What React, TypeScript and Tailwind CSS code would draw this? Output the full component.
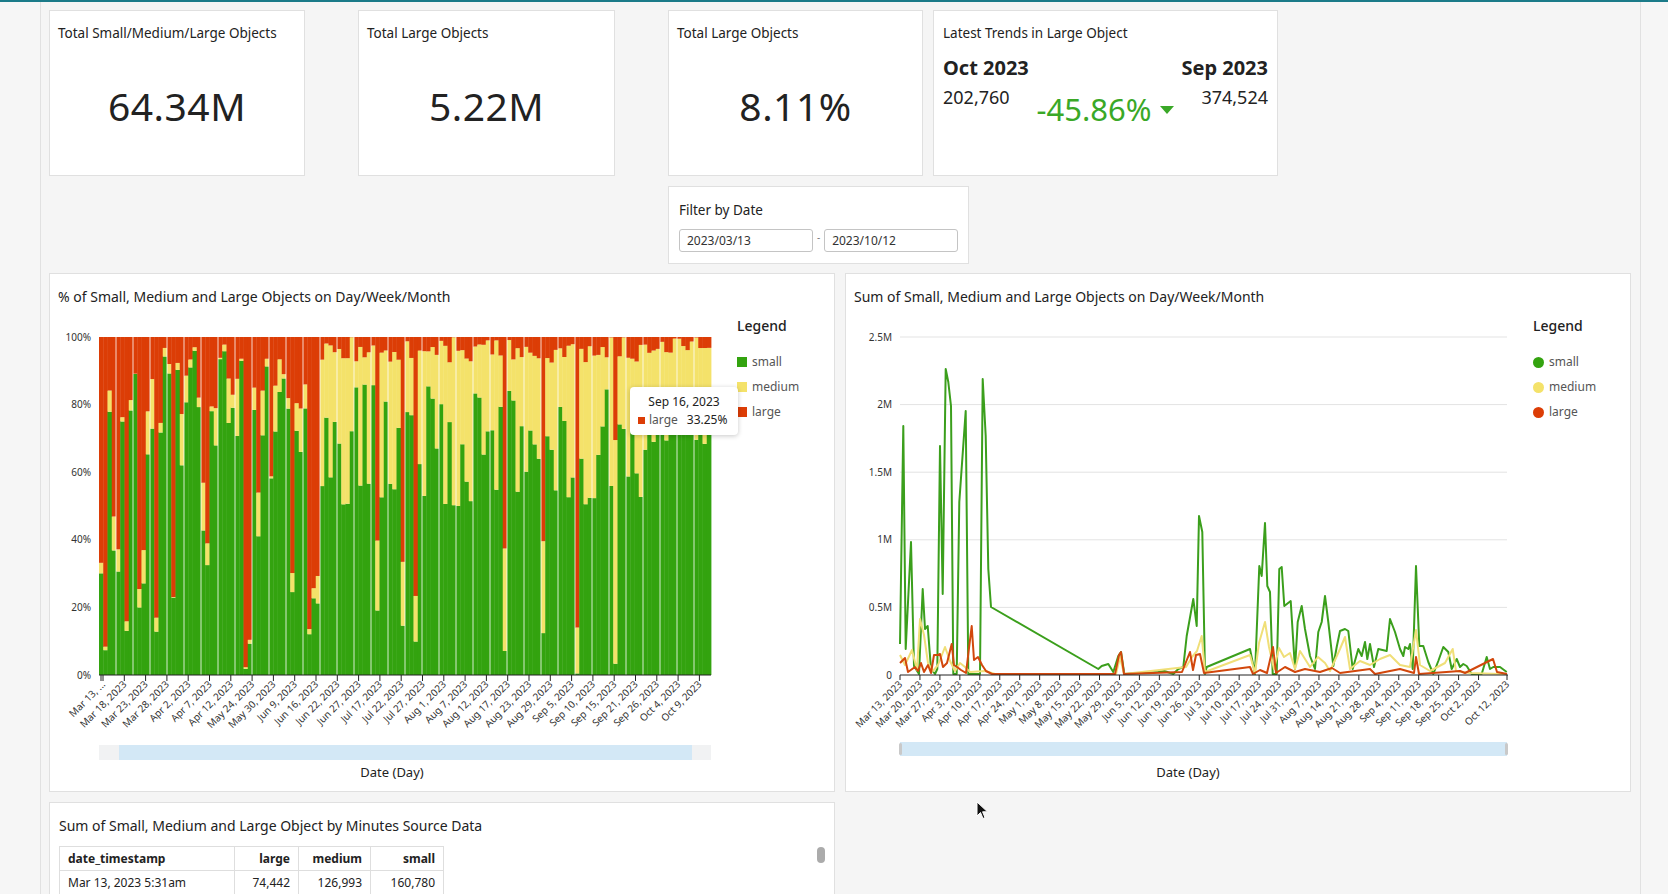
import React from 'react';

const GREEN = '#33a30f';
const YELLOW = '#f4e26a';
const RED = '#dc3d06';

type Pt = [number, number];

// simple seeded random so the bars stay put between renders
function makeRand(seed: number) {
  let s = seed;
  return () => {
    s = (s * 16807) % 2147483647;
    return (s - 1) / 2147483646;
  };
}

const bars = (() => {
  const rand = makeRand(11);
  const out: { small: number; medium: number; large: number }[] = [];
  for (let i = 0; i < 144; i++) {
    let small = 0;
    let medium = 0;
    let large = 0;
    const r = rand();
    if (i < 52) {
      if (r < 0.3) {
        large = 0.4 + rand() * 0.6;
        medium = rand() * 0.3 * (1 - large);
        small = 1 - large - medium;
      } else {
        small = 0.62 + rand() * 0.34;
        medium = rand() * (1 - small) * 0.6;
        large = 1 - small - medium;
      }
    } else if (i < 128) {
      if (r < 0.1) {
        large = 0.3 + rand() * 0.65;
        small = rand() * 0.5 * (1 - large);
        medium = 1 - large - small;
      } else {
        small = 0.5 + rand() * 0.36;
        large = rand() * 0.08;
        medium = 1 - small - large;
      }
    } else {
      small = 0.66 + rand() * 0.14;
      large = rand() * 0.05;
      medium = 1 - small - large;
    }
    out.push({ small, medium, large });
  }
  return out;
})();

const barLabels = [
  'Mar 13, ...', 'Mar 18, 2023', 'Mar 23, 2023', 'Mar 28, 2023', 'Apr 2, 2023', 'Apr 7, 2023',
  'Apr 12, 2023', 'May 24, 2023', 'May 30, 2023', 'Jun 9, 2023', 'Jun 16, 2023', 'Jun 22, 2023',
  'Jun 27, 2023', 'Jul 17, 2023', 'Jul 22, 2023', 'Jul 27, 2023', 'Aug 1, 2023', 'Aug 7, 2023',
  'Aug 12, 2023', 'Aug 17, 2023', 'Aug 23, 2023', 'Aug 29, 2023', 'Sep 5, 2023', 'Sep 10, 2023',
  'Sep 15, 2023', 'Sep 21, 2023', 'Sep 26, 2023', 'Oct 4, 2023', 'Oct 9, 2023',
];

const weekLabels = [
  'Mar 13', 'Mar 20', 'Mar 27', 'Apr 3', 'Apr 10', 'Apr 17', 'Apr 24', 'May 1', 'May 8', 'May 15',
  'May 22', 'May 29', 'Jun 5', 'Jun 12', 'Jun 19', 'Jun 26', 'Jul 3', 'Jul 10', 'Jul 17', 'Jul 24',
  'Jul 31', 'Aug 7', 'Aug 14', 'Aug 21', 'Aug 28', 'Sep 4', 'Sep 11', 'Sep 18', 'Sep 25', 'Oct 2',
];

// [x px from first day, height px above zero]
const smallLine: Pt[] = [
  [0, 31], [3.3, 249], [5.7, 26], [11, 133], [14, 9], [19, 1], [22.7, 86], [25, 46], [27.7, 49], [31, 6],
  [35, 1], [37.3, 6], [40, 229], [42.7, 81], [45.7, 306], [48.3, 293], [51, 269], [53.3, 1], [56.7, 1],
  [59.3, 173], [65.7, 264], [68.3, 1], [80, 1], [82.7, 296], [85.7, 239], [88.3, 106], [91, 68],
  [198.3, 6], [201.7, 9], [208.3, 11], [213.3, 3], [218.3, 19], [221, 23], [224.3, 1], [258.3, 3],
  [264.3, 4], [273.3, 1], [278.3, 6], [283.3, 8], [286.7, 39], [293.3, 76], [296.7, 49], [299, 159],
  [302.3, 143], [305, 1], [306.7, 8], [350, 26], [355, 1], [359.3, 109], [361.7, 99], [365, 152],
  [367.3, 89], [370, 83], [372.7, 1], [376.7, 1], [379.3, 106], [381.7, 108], [384.3, 69], [390.7, 74],
  [395, 6], [397.7, 53], [401.7, 69], [405, 46], [410, 19], [415, 6], [418.3, 43], [421.7, 53], [425, 79],
  [428.3, 53], [433.3, 9], [436.7, 28], [440, 44], [445, 46], [448.3, 44], [452.7, 6], [458.3, 26],
  [461.7, 19], [465, 33], [467.3, 16], [470, 31], [474, 8], [478.3, 26], [486.7, 24], [490, 56], [495, 43],
  [500, 26], [503.3, 19], [505, 28], [508.3, 26], [510, 31], [512.7, 6], [516, 109], [519.3, 29],
  [523.3, 29], [528.3, 13], [533.3, 1], [538.3, 14], [543.3, 28], [548.3, 23], [551.7, 6], [556.7, 16],
  [560, 8], [563.3, 11], [566.7, 9], [571.7, 1], [581.7, 1], [586.7, 18], [590, 6], [593.3, 8], [600, 8],
  [606.7, 3],
];

const mediumLine: Pt[] = [
  [0, 20], [5, 10], [12, 25], [17, 5], [20, 56], [24, 40], [28, 12], [33, 4], [38, 10], [45, 28], [50, 14],
  [55, 4], [60, 12], [65, 8], [70, 3], [85, 4], [95, 1], [216, 1], [220, 18], [224, 1], [286, 8], [292, 18],
  [297, 24], [301.7, 39], [305, 3], [350, 20], [355, 2], [359, 32], [365, 53], [369, 28], [374, 6],
  [379, 27], [384, 18], [390, 22], [395, 6], [400, 24], [410, 8], [418, 18], [425, 12], [430, 4], [440, 26],
  [445, 38], [450, 6], [460, 14], [470, 10], [480, 16], [490, 20], [500, 10], [510, 8], [516, 45],
  [520, 10], [530, 4], [545, 12], [552.7, 26], [556, 4], [570, 2], [600, 1], [607, 1],
];

const largeLine: Pt[] = [
  [0, 12], [5, 17], [8, 3], [15, 8], [18, 4], [21, 12], [24, 3], [28, 10], [31, 2], [34, 20], [38, 20],
  [40, 21], [43, 8], [47, 12], [51.7, 31], [54, 10], [57, 8], [61, 5], [66, 2], [71.7, 49], [74, 15],
  [78, 18], [82, 10], [86, 4], [92, 1], [215, 1], [219, 20], [221, 23], [224, 1], [282, 3], [290, 23],
  [293, 5], [296, 20], [300, 21], [304, 2], [350, 8], [353, 1], [360, 5], [367, 2], [373, 28], [376, 2],
  [385, 8], [395, 3], [405, 6], [420, 3], [432, 7], [440, 2], [470, 6], [475, 1], [500, 6], [514, 2],
  [516, 18], [519, 1], [560, 4], [565, 2], [593, 16], [597, 3], [607, 1],
];

// plot box inside the chart svg
const TOP = 23;
const BOTTOM = 361;
const PLOT_H = BOTTOM - TOP;

function Card({ className, children }: { className: string; children?: React.ReactNode }) {
  return <div className={`relative border border-[#e0e0e0] bg-white ${className}`}>{children}</div>;
}

function KpiCard({ title, value, className }: { title: string; value: string; className: string }) {
  return (
    <Card className={`flex flex-col ${className}`}>
      <div className="px-[8px] pt-[13px] text-[13.5px] leading-[18px]">{title}</div>
      <div className="flex flex-1 items-center justify-center pb-[6px] text-[39px] leading-none tracking-[0.5px]">
        {value}
      </div>
    </Card>
  );
}

function Legend({ round }: { round?: boolean }) {
  const items = [
    { label: 'small', color: GREEN },
    { label: 'medium', color: YELLOW },
    { label: 'large', color: RED },
  ];
  return (
    <div className="pt-[2px]">
      <div className="text-[14px] font-medium leading-[20px]">Legend</div>
      <div className="mt-[17px] flex flex-col gap-[7px]">
        {items.map((it) => (
          <div key={it.label} className="flex h-[18px] items-center gap-[5px] text-[12px] text-[#555]">
            <span
              className={round ? 'h-[11px] w-[11px] rounded-full' : 'h-[10px] w-[10px]'}
              style={{ backgroundColor: it.color }}
            />
            {it.label}
          </div>
        ))}
      </div>
    </div>
  );
}

function XLabel({ x, text }: { x: number; text: string }) {
  return (
    <text
      x={x + 3}
      y={BOTTOM + 10}
      textAnchor="end"
      fontSize={10}
      fill="#333"
      transform={`rotate(-45 ${x + 3} ${BOTTOM + 10})`}
    >
      {text}
    </text>
  );
}

function BarChart() {
  const left = 49;
  const bw = 612 / bars.length;
  return (
    <svg width={687} height={476} className="shrink-0">
      {[0, 20, 40, 60, 80, 100].map((p) => (
        <text key={p} x={41} y={BOTTOM - (p / 100) * PLOT_H + 3.5} textAnchor="end" fontSize={10} fill="#333">
          {p}%
        </text>
      ))}
      {bars.map((b, i) => {
        const x = left + i * bw;
        const hs = b.small * PLOT_H;
        const hm = b.medium * PLOT_H;
        const hl = b.large * PLOT_H;
        return (
          <g key={i}>
            <rect x={x} y={BOTTOM - hs} width={bw + 0.4} height={hs} fill={GREEN} />
            <rect x={x} y={BOTTOM - hs - hm} width={bw + 0.4} height={hm} fill={YELLOW} />
            <rect x={x} y={TOP} width={bw + 0.4} height={hl} fill={RED} />
          </g>
        );
      })}
      {bars.map((_, i) =>
        i > 0 && i % 4 === 0 ? (
          <line key={i} x1={left + i * bw} x2={left + i * bw} y1={TOP} y2={BOTTOM} stroke="#fff" strokeWidth={0.8} />
        ) : null,
      )}
      <line x1={left} x2={left + 612} y1={BOTTOM} y2={BOTTOM} stroke="#222" strokeWidth={1} />
      <line x1={51} x2={51} y1={BOTTOM} y2={BOTTOM + 6} stroke="#222" />
      {barLabels.map((l, i) => {
        const x = 53 + i * 21.3;
        return (
          <g key={l}>
            <line x1={x} x2={x} y1={BOTTOM} y2={BOTTOM + 6} stroke="#222" />
            <XLabel x={x} text={l} />
          </g>
        );
      })}
      <rect x={49} y={431} width={612} height={15} fill="#f1f2f3" />
      <rect x={69} y={431} width={573} height={15} fill="#d3e8f6" />
      <text x={342} y={463} textAnchor="middle" fontSize={13} fill="#222">
        Date (Day)
      </text>
    </svg>
  );
}

function LineChart() {
  const left = 54;
  const toPoints = (pts: Pt[]) => pts.map(([x, h]) => `${left + x},${BOTTOM - h}`).join(' ');
  const yTicks = ['0', '0.5M', '1M', '1.5M', '2M', '2.5M'];
  return (
    <svg width={687} height={476} className="shrink-0">
      {yTicks.map((t, i) => {
        const y = BOTTOM - i * (PLOT_H / 5);
        return (
          <g key={t}>
            {i > 0 && <line x1={left} x2={661} y1={y} y2={y} stroke="#e3e3e3" />}
            <text x={46} y={y + 3.5} textAnchor="end" fontSize={10} fill="#333">
              {t}
            </text>
          </g>
        );
      })}
      <polyline points={toPoints(smallLine)} fill="none" stroke="#3b9f1c" strokeWidth={2} strokeLinejoin="round" />
      <polyline points={toPoints(mediumLine)} fill="none" stroke="#f0df78" strokeWidth={2} strokeLinejoin="round" />
      <polyline points={toPoints(largeLine)} fill="none" stroke="#d2470c" strokeWidth={2} strokeLinejoin="round" />
      <line x1={left} x2={662} y1={BOTTOM} y2={BOTTOM} stroke="#222" />
      {weekLabels.map((l, i) => {
        const x = left + i * 19.95;
        return (
          <g key={l}>
            <line x1={x} x2={x} y1={BOTTOM} y2={BOTTOM + 5} stroke="#222" />
            <XLabel x={x} text={`${l}, 2023`} />
          </g>
        );
      })}
      <line x1={661} x2={661} y1={BOTTOM} y2={BOTTOM + 5} stroke="#222" />
      <XLabel x={661} text="Oct 12, 2023" />
      <rect x={54} y={428} width={607} height={14} fill="#d3e8f6" />
      <rect x={53} y={429} width={3} height={12} rx={1.5} fill="#c9c9c9" />
      <rect x={659} y={429} width={3} height={12} rx={1.5} fill="#c9c9c9" />
      <text x={342} y={463} textAnchor="middle" fontSize={13} fill="#222">
        Date (Day)
      </text>
    </svg>
  );
}

function ChartCard({ title, children }: { title: string; children: React.ReactNode }) {
  return (
    <Card className="h-[519px] w-[786px]">
      <div className="h-[40px] px-[8px] pt-[14px] text-[14px] leading-[18px]">{title}</div>
      <div className="flex">{children}</div>
    </Card>
  );
}

export default function App() {
  return (
    <div className="relative flex h-[894px] w-[1668px] flex-col overflow-hidden bg-[#f5f5f5] font-['Noto_Sans','Open_Sans',sans-serif] text-[#222]">
      <div className="h-[2px] shrink-0 bg-[#1b7b89]" />
      <div className="flex min-h-0 flex-1">
        <div className="w-[41px] shrink-0 border-r border-[#e1e1e1] bg-[#f6f6f6]" />

        <main className="min-w-0 flex-1 pl-[8px] pt-[8px]">
          <div className="flex h-[166px]">
            <KpiCard title="Total Small/Medium/Large Objects" value="64.34M" className="w-[256px]" />
            <KpiCard title="Total Large Objects" value="5.22M" className="ml-[53px] w-[257px]" />
            <KpiCard title="Total Large Objects" value="8.11%" className="ml-[53px] w-[255px]" />
            <Card className="ml-[10px] w-[345px] px-[9px]">
              <div className="pt-[13px] text-[13.5px] leading-[18px]">Latest Trends in Large Object</div>
              <div className="mt-[13px] flex justify-between">
                <div>
                  <div className="text-[20px] font-bold leading-[26px]">Oct 2023</div>
                  <div className="mt-[4px] text-[18px] leading-[24px]">202,760</div>
                </div>
                <div className="mt-[39px] flex items-center gap-[8px] self-start">
                  <span className="text-[31px] leading-none text-[#3aa827]">-45.86%</span>
                  <svg width="14" height="9" viewBox="0 0 14 9" className="mt-[2px]">
                    <path d="M0 0 L14 0 L7 8 Z" fill="#3aa827" />
                  </svg>
                </div>
                <div className="text-right">
                  <div className="text-[20px] font-bold leading-[26px]">Sep 2023</div>
                  <div className="mt-[4px] text-[18px] leading-[24px]">374,524</div>
                </div>
              </div>
            </Card>
          </div>

          <Card className="ml-[619px] mt-[10px] h-[78px] w-[301px] px-[10px]">
            <div className="pt-[14px] text-[13.5px] leading-[18px]">Filter by Date</div>
            <div className="mt-[10px] flex items-center">
              <div className="flex h-[23px] w-[134px] items-center rounded-[3px] border border-[#c4c4c4] pl-[7px] text-[12px] text-[#333]">
                2023/03/13
              </div>
              <span className="mx-[4px] -mt-[6px] text-[10px] text-[#777]">-</span>
              <div className="flex h-[23px] w-[134px] items-center rounded-[3px] border border-[#c4c4c4] pl-[7px] text-[12px] text-[#333]">
                2023/10/12
              </div>
            </div>
          </Card>

          <div className="mt-[9px] flex gap-[10px]">
            <ChartCard title="% of Small, Medium and Large Objects on Day/Week/Month">
              <BarChart />
              <Legend />
              <div className="absolute left-[580px] top-[113px] w-[108px] rounded-[4px] bg-white px-[8px] py-[6px] text-[12px] leading-[18px] shadow-[0_1px_5px_rgba(0,0,0,0.22)]">
                <div className="text-center text-[#222]">Sep 16, 2023</div>
                <div className="flex items-center gap-[4px]">
                  <span className="h-[7px] w-[7px]" style={{ backgroundColor: RED }} />
                  <span className="text-[#555]">large</span>
                  <span className="ml-[5px] text-[#222]">33.25%</span>
                </div>
              </div>
            </ChartCard>
            <ChartCard title="Sum of Small, Medium and Large Objects on Day/Week/Month">
              <LineChart />
              <Legend round />
            </ChartCard>
          </div>

          <Card className="mt-[10px] h-[140px] w-[786px] px-[9px]">
            <div className="pt-[14px] text-[14px] leading-[18px]">
              Sum of Small, Medium and Large Object by Minutes Source Data
            </div>
            <table className="mt-[11px] border-collapse text-[12px]">
              <thead>
                <tr className="h-[24px]">
                  <th className="w-[175px] border border-[#dedede] px-[8px] text-left font-bold">date_timestamp</th>
                  <th className="w-[64px] border border-[#dedede] px-[8px] text-right font-bold">large</th>
                  <th className="w-[72px] border border-[#dedede] px-[8px] text-right font-bold">medium</th>
                  <th className="w-[73px] border border-[#dedede] px-[8px] text-right font-bold">small</th>
                </tr>
              </thead>
              <tbody>
                <tr className="h-[24px]">
                  <td className="border border-[#dedede] px-[8px]">Mar 13, 2023 5:31am</td>
                  <td className="border border-[#dedede] px-[8px] text-right">74,442</td>
                  <td className="border border-[#dedede] px-[8px] text-right">126,993</td>
                  <td className="border border-[#dedede] px-[8px] text-right">160,780</td>
                </tr>
              </tbody>
            </table>
            <div className="absolute right-[9px] top-[44px] h-[16px] w-[8px] rounded-full bg-[#ababab]" />
          </Card>
        </main>

        <div className="w-[28px] shrink-0 border-l border-[#e1e1e1] bg-[#f6f6f6]" />
      </div>

      {/* mouse pointer */}
      <svg width="13" height="19" viewBox="0 0 13 19" className="absolute left-[976px] top-[801px]">
        <path d="M1 1 L1 15 L4.5 11.5 L7 17.5 L9 16.6 L6.6 10.8 L11.5 10.8 Z" fill="#111" stroke="#fff" strokeWidth="1" />
      </svg>
    </div>
  );
}
